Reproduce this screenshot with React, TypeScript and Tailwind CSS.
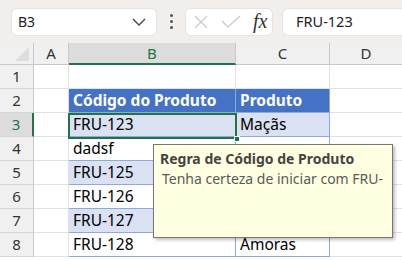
import React from "react";

const cols = [34, 35, 167, 94, 72];
const font = { fontFamily: '"Noto Sans", "Open Sans", Arial, sans-serif' };

type Cell = { t?: string; cls?: string };

export default function App() {
  const rows: { n: number; b: Cell; c: Cell; band?: string }[] = [
    { n: 1, b: {}, c: {} },
    { n: 2, b: { t: "Código do Produto" }, c: { t: "Produto" }, band: "head" },
    { n: 3, b: { t: "FRU-123" }, c: { t: "Maçãs" }, band: "blue" },
    { n: 4, b: { t: "dadsf" }, c: {}, band: "white" },
    { n: 5, b: { t: "FRU-125" }, c: {}, band: "blue" },
    { n: 6, b: { t: "FRU-126" }, c: {}, band: "white" },
    { n: 7, b: { t: "FRU-127" }, c: {}, band: "blue" },
    { n: 8, b: { t: "FRU-128" }, c: { t: "Amoras" }, band: "white" },
  ];

  const bandCls = (band?: string) => {
    if (band === "head") return "bg-[#4472c4] text-white font-bold border-b border-[#8ea9db]";
    if (band === "blue") return "bg-[#d9e1f2] text-black border-b border-[#8ea9db]";
    if (band === "white") return "bg-white text-black border-b border-[#8ea9db]";
    return "bg-white border-b border-[#e1e1e1]";
  };

  return (
    <div className="w-[402px] h-[260px] overflow-hidden relative bg-white" style={font}>
      {/* toolbar */}
      <div className="h-[43px] bg-[#f1eeec] flex items-center pl-[11px] gap-0">
        <div className="w-[146px] h-[28px] bg-white rounded-[6px] border border-[#e6e2e0] flex items-center justify-between pl-[6px] pr-[10px]">
          <span className="text-[14px] text-[#222]">B3</span>
          <svg width="14" height="8" viewBox="0 0 14 8">
            <path d="M1 1 L7 7 L13 1" fill="none" stroke="#444" strokeWidth="1.3" />
          </svg>
        </div>
        <div className="w-[28px] flex flex-col items-center gap-[3px]">
          <div className="w-[3px] h-[3px] bg-[#555] rounded-full" />
          <div className="w-[3px] h-[3px] bg-[#555] rounded-full" />
          <div className="w-[3px] h-[3px] bg-[#555] rounded-full" />
        </div>
        <div className="w-[88px] h-[28px] bg-white rounded-[6px] border border-[#e6e2e0] flex items-center pl-[8px]">
          <svg width="14" height="14" viewBox="0 0 14 14">
            <path d="M1 1 L13 13 M13 1 L1 13" stroke="#c8c8c8" strokeWidth="1.2" />
          </svg>
          <svg className="ml-[13px]" width="20" height="14" viewBox="0 0 20 14">
            <path d="M1 6 L7 12 L19 1" fill="none" stroke="#c8c8c8" strokeWidth="1.2" />
          </svg>
          <span
            className="ml-[12px] text-[20px] italic text-[#333] leading-none -mt-[2px]"
            style={{ fontFamily: '"Liberation Serif", "DejaVu Serif", serif' }}
          >
            fx
          </span>
        </div>
        <div className="ml-[9px] flex-1 h-[28px] bg-white rounded-l-[6px] border border-r-0 border-[#e6e2e0] flex items-center pl-[13px]">
          <span className="text-[14.5px] text-[#222]">FRU-123</span>
        </div>
      </div>

      {/* grid */}
      <div
        className="grid"
        style={{ gridTemplateColumns: cols.map((c) => c + "px").join(" "), gridTemplateRows: "22px repeat(8, 24px)" }}
      >
        {/* header row */}
        <div className="bg-[#f0f0f0] border-r border-b border-[#c8c8c8] relative">
          <svg className="absolute right-[4px] bottom-[3px]" width="14" height="14" viewBox="0 0 14 14">
            <path d="M14 0 L14 14 L0 14 Z" fill="#dedede" />
          </svg>
        </div>
        <div className="bg-[#f0f0f0] border-r border-b border-[#c8c8c8] flex items-center justify-center text-[15px] text-[#333]">A</div>
        <div className="bg-[#dcdcdc] border-r border-[#c8c8c8] border-b-2 border-b-[#217346] flex items-center justify-center text-[15px] text-[#217346]">B</div>
        <div className="bg-[#f0f0f0] border-r border-b border-[#c8c8c8] flex items-center justify-center text-[15px] text-[#333]">C</div>
        <div className="bg-[#f0f0f0] border-b border-[#c8c8c8] flex items-center justify-center text-[15px] text-[#333]">D</div>

        {rows.map((r) => (
          <React.Fragment key={r.n}>
            <div
              className={
                r.n === 3
                  ? "bg-[#dcdcdc] border-r-2 border-r-[#217346] border-b border-b-[#d4d4d4] flex items-center justify-center text-[15px] text-[#217346]"
                  : "bg-[#f0f0f0] border-r border-b border-[#c8c8c8] border-b-[#d4d4d4] flex items-center justify-center text-[15px] text-[#333]"
              }
            >
              {r.n}
            </div>
            <div className="bg-white border-r border-b border-[#e1e1e1]" />
            <div className={`${bandCls(r.band)} border-r border-r-[#8ea9db] flex items-center pl-[4px] text-[15.5px] whitespace-nowrap overflow-hidden ${r.band ? "" : "border-r-[#e1e1e1]"}`}>
              {r.b.t}
            </div>
            <div className={`${bandCls(r.band)} border-r ${r.band ? "border-r-[#8ea9db]" : "border-r-[#e1e1e1]"} flex items-center pl-[4px] text-[15.5px] whitespace-nowrap overflow-hidden`}>
              {r.c.t}
            </div>
            <div className="bg-white border-b border-[#e1e1e1]" />
          </React.Fragment>
        ))}
      </div>

      {/* selection */}
      <div className="absolute left-[68px] top-[113px] w-[169px] h-[26px] border-2 border-[#217346] pointer-events-none" />
      <div className="absolute left-[234px] top-[136px] w-[6px] h-[6px] bg-[#217346] border border-white" />

      {/* tooltip */}
      <div className="absolute left-[153px] top-[144px] w-[240px] h-[94px] bg-[#ffffe1] border border-[#767676] shadow-[2px_2px_3px_rgba(0,0,0,0.25)] pl-[6px] pt-[4px]">
        <div className="text-[14px] font-bold text-[#444] leading-[20px]">Regra de Código de Produto</div>
        <div className="text-[14px] text-[#595959] leading-[20px] pl-[2px]">Tenha certeza de iniciar com FRU-</div>
      </div>
    </div>
  );
}
